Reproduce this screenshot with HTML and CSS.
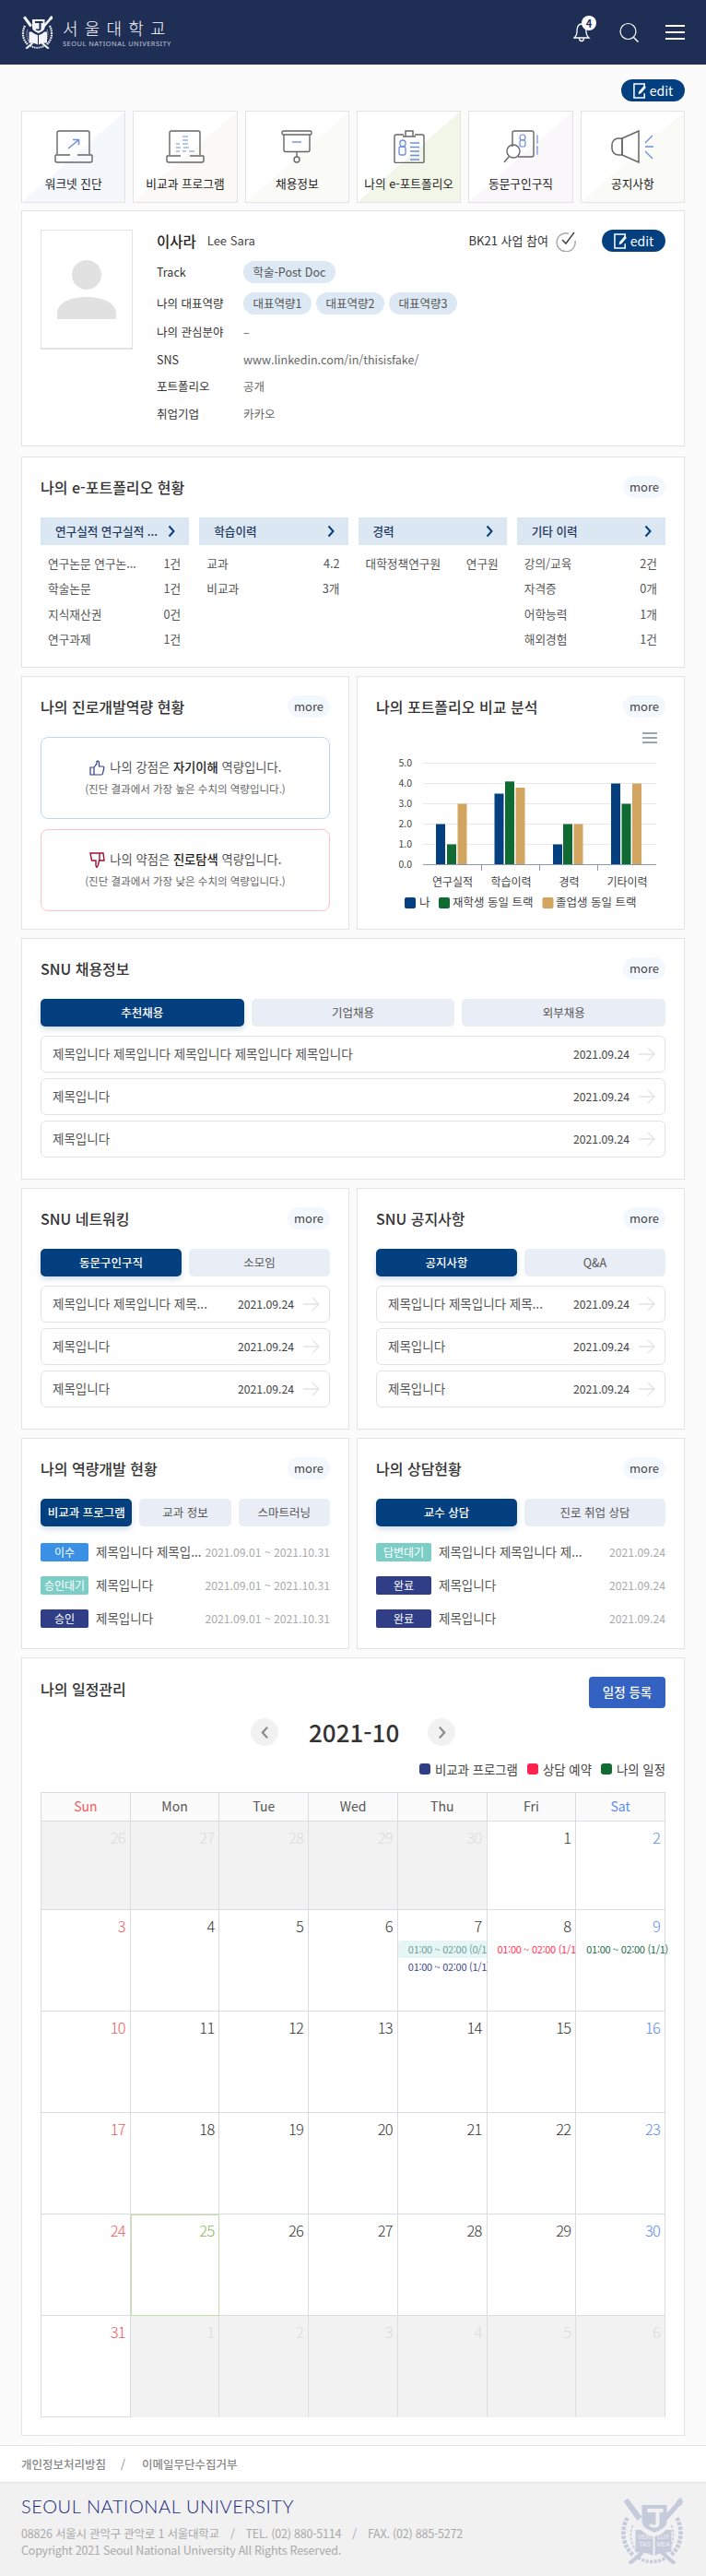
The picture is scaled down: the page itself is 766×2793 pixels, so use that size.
FILE: index.html
```html
<!DOCTYPE html>
<html lang="ko">
<head>
<meta charset="utf-8">
<title>서울대학교</title>
<link rel="stylesheet" href="styles.css">
</head>
<body>
<svg class="sprite" xmlns="http://www.w3.org/2000/svg">
  <symbol id="seal" viewBox="0 0 70 72">
    <g fill="none" stroke="currentColor">
      <path d="M8 22C1 36 3 52 14 62" stroke-width="4.500" stroke-dasharray="3.500 1.500"/>
      <path d="M62 22C69 36 67 52 56 62" stroke-width="4.500" stroke-dasharray="3.500 1.500"/>
      <path d="M14 30C10 40 12 52 20 60" stroke-width="1.500" stroke-dasharray="3 1.500"/>
      <path d="M56 30C60 40 58 52 50 60" stroke-width="1.500" stroke-dasharray="3 1.500"/>
      <path d="M20 65C28 71 42 71 50 65" stroke-width="3.500" stroke-dasharray="3 1.500"/>
    </g>
    <g fill="currentColor">
      <path d="M4 4l5-3 15 20-5 4z"/>
      <path d="M66 0c3 3 3 6 1 8l-3 2-14 16-4-4 14-15c1-3 3-5 6-7z"/>
      <path d="M9 70l14-12 3 3-14 12z"/>
      <path d="M61 70L47 58l-3 3 14 12z"/>
      <path fill-rule="evenodd" d="M24 8h27v18c0 6-7 9-13.500 12C31 35 24 32 24 26zM30 12v4h9v12c0 2-3 2-6 0l-1 3c5 3 11 2 11-3V16h4v-4z"/>
      <path d="M17 35h6c4 4 9 6 13 7v21c-5-3-12-4-19-4z"/>
      <path d="M56 35h-6c-3 4-8 6-12 7v21c5-3 11-4 18-4z"/>
    </g>
  </symbol>
  <symbol id="pen" viewBox="0 0 16 18">
    <path d="M13 6V1H1v16h12v-5" fill="none" stroke="currentColor" stroke-width="1.6"/>
    <path d="M6 13l.5-3L12.500 3l2.400 2-6 7z" fill="currentColor"/>
  </symbol>
  <symbol id="chev" viewBox="0 0 8 14">
    <path d="M1.500 1.500L6.500 7l-5 5.500" fill="none" stroke="currentColor" stroke-width="2"/>
  </symbol>
  <symbol id="arrow" viewBox="0 0 18 16">
    <path d="M0 8h17M10 1l7 7-7 7" fill="none" stroke="currentColor" stroke-width="1.400"/>
  </symbol>
</svg>

<header class="top">
  <a class="logo">
    <svg class="logo-seal"><use href="#seal"/></svg>
    <span class="logo-text">
      <span class="logo-ko">서울대학교</span>
      <span class="logo-en">SEOUL NATIONAL UNIVERSITY</span>
    </span>
  </a>
  <div class="top-icons">
    <span class="bell">
      <svg width="20" height="22" viewBox="0 0 20 22"><path d="M9 2C4.500 2 4 6 4 10c0 3-.5 5-3 7h16c-2.500-2-3-4-3-7 0-4-.5-8-5-8zM6.500 17.500c0 2 1 3 2.500 3s2.500-1 2.500-3" fill="none" stroke="#fff" stroke-width="1.300"/></svg>
      <b class="bell-count">4</b>
    </span>
    <svg class="search" width="21" height="22" viewBox="0 0 21 22"><circle cx="9.500" cy="10" r="8.500" fill="none" stroke="#fff" stroke-width="1.200"/><path d="M15.500 16.500L20.500 21.500" stroke="#fff" stroke-width="1.500"/></svg>
    <span class="burger"><i></i><i></i><i></i></span>
  </div>
</header>

<main class="wrap">
  <div class="edit-line"><a class="edit"><svg class="edit-ic"><use href="#pen"/></svg>edit</a></div>

  <nav class="tiles">
    <a class="tile t1">
      <svg width="42" height="36" viewBox="0 0 42 36"><g fill="none" stroke="#666" stroke-width="1.400"><path d="M3 26V3a2 2 0 0 1 2-2h31a2 2 0 0 1 2 2v23"/><path d="M1 27h16M25 27h16M1 27v6a2 2 0 0 0 2 2h36a2 2 0 0 0 2-2v-6"/></g><path d="M15 20l11-9M20 10.500h6.500V16" fill="none" stroke="#6f8fdc" stroke-width="1.500"/></svg>
      <span>워크넷 진단</span>
    </a>
    <a class="tile t2">
      <svg width="42" height="36" viewBox="0 0 42 36"><g fill="none" stroke="#666" stroke-width="1.400"><path d="M4 27V3a2 2 0 0 1 2-2h29a2 2 0 0 1 2 2v24"/><path d="M1 28h15M26 28h15M1 28v5a2 2 0 0 0 2 2h36a2 2 0 0 0 2-2v-5"/></g><path d="M18 7h6M18 11h6M18 15h6M11 15h4M11 19h5M19 19h6M11 23h4M18 23h4M25 23h6" stroke="#6f8fdc" stroke-width="1.200"/></svg>
      <span>비교과 프로그램</span>
    </a>
    <a class="tile t3">
      <svg width="34" height="36" viewBox="0 0 34 36"><g fill="none" stroke="#666" stroke-width="1.400"><rect x="1" y="1" width="32" height="4" rx="1.500"/><path d="M3 5v17a1.500 1.500 0 0 0 1.500 1.500h25A1.500 1.500 0 0 0 31 22V5"/><path d="M17 24v5"/><circle cx="17" cy="32" r="3"/></g><path d="M12 13h10" stroke="#6f8fdc" stroke-width="1.400"/></svg>
      <span>채용정보</span>
    </a>
    <a class="tile t4">
      <svg width="34" height="36" viewBox="0 0 34 36"><g fill="none" stroke="#666" stroke-width="1.400"><path d="M11 5H3a2 2 0 0 0-2 2v27a1.500 1.500 0 0 0 1.500 1.500h29a1.500 1.500 0 0 0 1.500-1.500V7a2 2 0 0 0-2-2h-8"/><path d="M10 7h14M13 7V1h8v6"/></g><g fill="none" stroke="#6f8fdc" stroke-width="1.300"><rect x="7" y="11" width="6" height="7" rx="3"/><rect x="6" y="18" width="7" height="9" rx="2"/><path d="M18 14h10M18 18.500h10M18 23h10M18 27.500h10M18 32h10"/></g></svg>
      <span>나의 e-포트폴리오</span>
    </a>
    <a class="tile t5">
      <svg width="38" height="36" viewBox="0 0 38 36"><g fill="none" stroke="#666" stroke-width="1.400"><path d="M10 18V3a2 2 0 0 1 2-2h19a2 2 0 0 1 2 2v24a2 2 0 0 1-2 2H16"/><circle cx="11" cy="23" r="7"/><path d="M6 29l-5 6"/></g><g fill="none" stroke="#6f8fdc" stroke-width="1.200"><rect x="18" y="5" width="6" height="6" rx="3"/><rect x="18" y="11" width="6" height="7" rx="2"/><path d="M36 6h1v8h-1M36 18h1v8h-1"/></g></svg>
      <span>동문구인구직</span>
    </a>
    <a class="tile t6">
      <svg width="48" height="36" viewBox="0 0 48 36"><g fill="none" stroke="#666" stroke-width="1.500"><path d="M13 9L31 1v34l-18-8z"/><path d="M13 9H9a7 7 0 0 0-7 7v4a7 7 0 0 0 7 7h4z"/></g><path d="M46 6l-8 8M38 18h9M38 23l8 8" fill="none" stroke="#6f8fdc" stroke-width="1.300"/></svg>
      <span>공지사항</span>
    </a>
  </nav>

  <section class="card profile">
    <div class="photo">
      <svg width="66" height="65" viewBox="0 0 66 65"><ellipse cx="33" cy="16" rx="16" ry="16" fill="#e1e1e1"/><path d="M1 64V58C1 46 16 40 33 40s32 6 32 18v6z" fill="#e1e1e1"/></svg>
    </div>
    <div class="info">
      <div class="name-row">
        <strong class="name">이사라</strong><span class="name-en">Lee Sara</span>
        <span class="bk">BK21 사업 참여</span>
        <svg class="bk-ic" width="23" height="23" viewBox="0 0 23 23"><path d="M14 3.200A10 10 0 1 0 21 11" fill="none" stroke="#aaa" stroke-width="1.500"/><path d="M7 10l4 4 9-12" fill="none" stroke="#444" stroke-width="1.500"/></svg>
        <a class="edit"><svg class="edit-ic"><use href="#pen"/></svg>edit</a>
      </div>
      <dl class="facts">
        <dt>Track</dt><dd><span class="chip">학술-Post Doc</span></dd>
        <dt>나의 대표역량</dt><dd><span class="chip">대표역량1</span><span class="chip">대표역량2</span><span class="chip">대표역량3</span></dd>
        <dt>나의 관심분야</dt><dd>–</dd>
        <dt>SNS</dt><dd>www.linkedin.com/in/thisisfake/</dd>
        <dt>포트폴리오</dt><dd>공개</dd>
        <dt>취업기업</dt><dd>카카오</dd>
      </dl>
    </div>
  </section>

  <section class="card port">
    <div class="head"><h2>나의 e-포트폴리오 현황</h2><a class="more">more</a></div>
    <div class="port-grid">
      <div>
        <a class="port-head"><span>연구실적 연구실적 ...</span><svg class="chev"><use href="#chev"/></svg></a>
        <ul class="port-list">
          <li><span>연구논문 연구논...</span><span>1건</span></li>
          <li><span>학술논문</span><span>1건</span></li>
          <li><span>지식재산권</span><span>0건</span></li>
          <li><span>연구과제</span><span>1건</span></li>
        </ul>
      </div>
      <div>
        <a class="port-head"><span>학습이력</span><svg class="chev"><use href="#chev"/></svg></a>
        <ul class="port-list">
          <li><span>교과</span><span>4.2</span></li>
          <li><span>비교과</span><span>3개</span></li>
        </ul>
      </div>
      <div>
        <a class="port-head"><span>경력</span><svg class="chev"><use href="#chev"/></svg></a>
        <ul class="port-list">
          <li><span>대학정책연구원</span><span>연구원</span></li>
        </ul>
      </div>
      <div>
        <a class="port-head"><span>기타 이력</span><svg class="chev"><use href="#chev"/></svg></a>
        <ul class="port-list">
          <li><span>강의/교육</span><span>2건</span></li>
          <li><span>자격증</span><span>0개</span></li>
          <li><span>어학능력</span><span>1개</span></li>
          <li><span>해외경험</span><span>1건</span></li>
        </ul>
      </div>
    </div>
  </section>

  <div class="two h-career">
    <section class="card">
      <div class="head"><h2>나의 진로개발역량 현황</h2><a class="more">more</a></div>
      <div class="verdict good">
        <p class="v-main"><svg class="thumb" width="17" height="17" viewBox="0 0 17 17"><path d="M1 8h4v8H1zM5 8l3-4V1.500c0-.8 2.500-.8 2.500 1.500v4h4c1 0 1.500 1 1.300 1.700l-1.300 6c-.2.800-.7 1.300-1.500 1.300H5" fill="none" stroke="#2f3e87" stroke-width="1.200"/></svg> 나의 강점은 <b>자기이해</b> 역량입니다.</p>
        <p class="v-sub">(진단 결과에서 가장 높은 수치의 역량입니다.)</p>
      </div>
      <div class="verdict bad">
        <p class="v-main"><svg class="thumb" width="17" height="17" viewBox="0 0 17 17"><path d="M1 1h14l1 8h-5.500l-1 5-1.500 2.500-1-2V9H2.500zM11 1v8" fill="none" stroke="#a01030" stroke-width="1.400"/></svg> 나의 약점은 <b>진로탐색</b> 역량입니다.</p>
        <p class="v-sub">(진단 결과에서 가장 낮은 수치의 역량입니다.)</p>
      </div>
    </section>
    <section class="card">
      <div class="head"><h2>나의 포트폴리오 비교 분석</h2><a class="more">more</a></div>
      <svg class="chart" viewBox="408 790 314 200" width="314" height="200">
        <path d="M697 795h16M697 800h16M697 805h16" stroke="#7a869a" stroke-width="1.500"/>
        <path d="M459 827.500h253M459 849.500h253M459 871.500h253M459 893.500h253M459 915.500h253" stroke="#e8e8e8" stroke-width="1"/>
        <g fill="#04407f">
          <rect x="473" y="893.500" width="10" height="44"/><rect x="536.500" y="860.500" width="10" height="77"/><rect x="600" y="915.500" width="10" height="22"/><rect x="663" y="849.500" width="10" height="88"/>
        </g>
        <g fill="#0f6b32">
          <rect x="485" y="915.500" width="10" height="22"/><rect x="548" y="847.300" width="10" height="90.200"/><rect x="611" y="893.500" width="10" height="44"/><rect x="674.500" y="871.500" width="10" height="66"/>
        </g>
        <g fill="#d1a460">
          <rect x="496.500" y="871.500" width="10" height="66"/><rect x="559.500" y="854" width="10" height="83.500"/><rect x="622.500" y="893.500" width="10" height="44"/><rect x="686" y="849.500" width="10" height="88"/>
        </g>
        <path d="M459 937.500h253" stroke="#8a99ad" stroke-width="1.200"/>
        <path d="M522.500 938v6M585.500 938v6M648.500 938v6" stroke="#8a99ad" stroke-width="1"/>
        <g class="c-y" text-anchor="end">
          <text x="447" y="831">5.0</text><text x="447" y="852.500">4.0</text><text x="447" y="874.500">3.0</text><text x="447" y="896.500">2.0</text><text x="447" y="918.500">1.0</text><text x="447" y="940.500">0.0</text>
        </g>
        <g class="c-x" text-anchor="middle">
          <text x="491" y="961">연구실적</text><text x="554.500" y="961">학습이력</text><text x="617.500" y="961">경력</text><text x="680.500" y="961">기타이력</text>
        </g>
        <g class="c-l">
          <rect x="439" y="973" width="12" height="12" rx="2" fill="#04407f"/><text x="455" y="983">나</text>
          <rect x="476" y="973" width="12" height="12" rx="2" fill="#0f6b32"/><text x="491" y="983">재학생 동일 트랙</text>
          <rect x="588.500" y="973" width="12" height="12" rx="2" fill="#d1a460"/><text x="603" y="983">졸업생 동일 트랙</text>
        </g>
      </svg>
    </section>
  </div>

  <section class="card snu">
    <div class="head"><h2>SNU 채용정보</h2><a class="more">more</a></div>
    <div class="tabs"><a class="tab on">추천채용</a><a class="tab">기업채용</a><a class="tab">외부채용</a></div>
    <ul class="rows">
      <li><span class="r-title">제목입니다 제목입니다 제목입니다 제목입니다 제목입니다</span><span class="r-date">2021.09.24</span><svg class="r-arrow"><use href="#arrow"/></svg></li>
      <li><span class="r-title">제목입니다</span><span class="r-date">2021.09.24</span><svg class="r-arrow"><use href="#arrow"/></svg></li>
      <li><span class="r-title">제목입니다</span><span class="r-date">2021.09.24</span><svg class="r-arrow"><use href="#arrow"/></svg></li>
    </ul>
  </section>

  <div class="two">
    <section class="card snu">
      <div class="head"><h2>SNU 네트워킹</h2><a class="more">more</a></div>
      <div class="tabs"><a class="tab on">동문구인구직</a><a class="tab">소모임</a></div>
      <ul class="rows">
        <li><span class="r-title">제목입니다 제목입니다 제목...</span><span class="r-date">2021.09.24</span><svg class="r-arrow"><use href="#arrow"/></svg></li>
        <li><span class="r-title">제목입니다</span><span class="r-date">2021.09.24</span><svg class="r-arrow"><use href="#arrow"/></svg></li>
        <li><span class="r-title">제목입니다</span><span class="r-date">2021.09.24</span><svg class="r-arrow"><use href="#arrow"/></svg></li>
      </ul>
    </section>
    <section class="card snu">
      <div class="head"><h2>SNU 공지사항</h2><a class="more">more</a></div>
      <div class="tabs"><a class="tab on">공지사항</a><a class="tab">Q&amp;A</a></div>
      <ul class="rows">
        <li><span class="r-title">제목입니다 제목입니다 제목...</span><span class="r-date">2021.09.24</span><svg class="r-arrow"><use href="#arrow"/></svg></li>
        <li><span class="r-title">제목입니다</span><span class="r-date">2021.09.24</span><svg class="r-arrow"><use href="#arrow"/></svg></li>
        <li><span class="r-title">제목입니다</span><span class="r-date">2021.09.24</span><svg class="r-arrow"><use href="#arrow"/></svg></li>
      </ul>
    </section>
  </div>

  <div class="two">
    <section class="card comp">
      <div class="head"><h2>나의 역량개발 현황</h2><a class="more">more</a></div>
      <div class="tabs"><a class="tab on">비교과 프로그램</a><a class="tab">교과 정보</a><a class="tab">스마트러닝</a></div>
      <ul class="status">
        <li><span class="badge b-blue">이수</span><span class="s-title">제목입니다 제목입...</span><span class="s-date">2021.09.01 ~ 2021.10.31</span></li>
        <li><span class="badge b-teal">승인대기</span><span class="s-title">제목입니다</span><span class="s-date">2021.09.01 ~ 2021.10.31</span></li>
        <li><span class="badge b-navy">승인</span><span class="s-title">제목입니다</span><span class="s-date">2021.09.01 ~ 2021.10.31</span></li>
      </ul>
    </section>
    <section class="card comp wide-badge">
      <div class="head"><h2>나의 상담현황</h2><a class="more">more</a></div>
      <div class="tabs"><a class="tab on">교수 상담</a><a class="tab">진로 취업 상담</a></div>
      <ul class="status">
        <li><span class="badge b-teal">답변대기</span><span class="s-title">제목입니다 제목입니다 제...</span><span class="s-date">2021.09.24</span></li>
        <li><span class="badge b-navy">완료</span><span class="s-title">제목입니다</span><span class="s-date">2021.09.24</span></li>
        <li><span class="badge b-navy">완료</span><span class="s-title">제목입니다</span><span class="s-date">2021.09.24</span></li>
      </ul>
    </section>
  </div>

  <section class="card cal-card">
    <div class="cal-top"><h2>나의 일정관리</h2><a class="reg">일정 등록</a></div>
    <div class="month">
      <a class="nav"><svg class="nav-ic flip"><use href="#chev"/></svg></a>
      <strong>2021-10</strong>
      <a class="nav"><svg class="nav-ic"><use href="#chev"/></svg></a>
    </div>
    <div class="cal-legend">
      <span><i class="dot d-navy"></i>비교과 프로그램</span>
      <span><i class="dot d-red"></i>상담 예약</span>
      <span><i class="dot d-green"></i>나의 일정</span>
    </div>
    <div class="cal">
      <div class="th sun">Sun</div><div class="th">Mon</div><div class="th">Tue</div><div class="th">Wed</div><div class="th">Thu</div><div class="th">Fri</div><div class="th sat">Sat</div>

      <div class="td off"><b>26</b></div><div class="td off"><b>27</b></div><div class="td off"><b>28</b></div><div class="td off"><b>29</b></div><div class="td off"><b>30</b></div><div class="td"><b>1</b></div><div class="td sat"><b>2</b></div>

      <div class="td sun"><b>3</b></div><div class="td"><b>4</b></div><div class="td"><b>5</b></div><div class="td"><b>6</b></div>
      <div class="td"><b>7</b><p class="ev ev-teal">01:00 ~ 02:00 (0/1</p><p class="ev ev-navy">01:00 ~ 02:00 (1/1)</p></div>
      <div class="td"><b>8</b><p class="ev ev-red">01:00 ~ 02:00 (1/1)</p></div>
      <div class="td sat"><b>9</b><p class="ev ev-green">01:00 ~ 02:00 (1/1)</p></div>

      <div class="td sun"><b>10</b></div><div class="td"><b>11</b></div><div class="td"><b>12</b></div><div class="td"><b>13</b></div><div class="td"><b>14</b></div><div class="td"><b>15</b></div><div class="td sat"><b>16</b></div>
      <div class="td sun"><b>17</b></div><div class="td"><b>18</b></div><div class="td"><b>19</b></div><div class="td"><b>20</b></div><div class="td"><b>21</b></div><div class="td"><b>22</b></div><div class="td sat"><b>23</b></div>
      <div class="td sun"><b>24</b></div><div class="td today"><b>25</b></div><div class="td"><b>26</b></div><div class="td"><b>27</b></div><div class="td"><b>28</b></div><div class="td"><b>29</b></div><div class="td sat"><b>30</b></div>
      <div class="td sun"><b>31</b></div><div class="td off"><b>1</b></div><div class="td off"><b>2</b></div><div class="td off"><b>3</b></div><div class="td off"><b>4</b></div><div class="td off"><b>5</b></div><div class="td off"><b>6</b></div>
    </div>
  </section>
</main>

<footer>
  <div class="foot-links"><a>개인정보처리방침</a><i>/</i><a>이메일무단수집거부</a></div>
  <div class="foot-main">
    <div>
      <p class="foot-brand">SEOUL NATIONAL UNIVERSITY</p>
      <p class="foot-addr">08826 서울시 관악구 관악로 1 서울대학교<i>/</i>TEL. (02) 880-5114<i>/</i>FAX. (02) 885-5272</p>
      <p class="foot-copy">Copyright 2021 Seoul National University All Rights Reserved.</p>
    </div>
    <svg class="foot-seal" viewBox="0 0 70 72"><use href="#seal" width="70" height="72"/><g class="seal-words" text-anchor="middle"><text x="27" y="45">VERI</text><text x="27" y="53">TAS</text><text x="47" y="45">LUX</text><text x="47" y="53">MEA</text></g></svg>
  </div>
</footer>
</body>
</html>
```

FILE: styles.css
```css
* { box-sizing: border-box; }
html, body { margin: 0; padding: 0; }
body {
  background: #fbfbfb;
  color: #444;
  font-family: "Noto Sans CJK KR", "Noto Sans", sans-serif;
  font-size: 13.5px;
  line-height: 20px;
}
h2, p, ul, dl, dd { margin: 0; padding: 0; }
ul { list-style: none; }
a { color: inherit; text-decoration: none; }
i { font-style: normal; }
.sprite { position: absolute; width: 0; height: 0; }

.top {
  height: 70px;
  background: #1f2e55;
  display: flex;
  align-items: center;
  justify-content: space-between;
  padding: 0 23px;
}
.logo { display: flex; align-items: center; gap: 10px; color: #f4f5f8; }
.logo-seal { width: 35px; height: 36px; }
.logo-text { display: flex; flex-direction: column; }
.logo-ko {
  font-size: 18px;
  font-weight: 300;
  line-height: 24px;
  letter-spacing: 7.2px;
  color: #fff;
}
.logo-en {
  font-family: "Noto Sans", sans-serif;
  font-size: 7.5px;
  line-height: 11px;
  letter-spacing: .45px;
  color: #c3c9d8;
  white-space: nowrap;
}
.top-icons { display: flex; align-items: center; }
.bell { position: relative; display: flex; margin-right: 30px; }
.bell-count {
  position: absolute;
  left: 9px;
  top: -7px;
  width: 16px;
  height: 16px;
  border-radius: 50%;
  background: #fff;
  color: #1f2e55;
  font-size: 11px;
  line-height: 16px;
  text-align: center;
}
.search { margin-right: 29px; }
.burger { display: flex; flex-direction: column; gap: 5px; width: 21px; }
.burger i { display: block; height: 2px; background: #fff; }

.wrap { padding: 16px 23px 10px; }
.edit-line { display: flex; justify-content: flex-end; margin-bottom: 10px; }
.edit {
  display: flex;
  align-items: center;
  justify-content: center;
  gap: 3px;
  width: 69px;
  height: 24px;
  border-radius: 12px;
  background: #04407f;
  color: #fff;
  font-size: 14px;
  flex: none;
}
.edit-ic { width: 15px; height: 17px; color: #fff; }

.tiles {
  display: grid;
  grid-template-columns: repeat(6, minmax(0, 1fr));
  gap: 8px;
  margin-bottom: 8px;
}
.tile {
  height: 100px;
  border: 1px solid #e3e3e3;
  display: flex;
  flex-direction: column;
  align-items: center;
  padding-top: 20px;
  font-size: 12.7px;
  color: #222;
}
.tile svg { height: 36px; margin-bottom: 12px; }
.t1 { background: linear-gradient(to bottom right, #fff 50%, #f4f8fd 50%); }
.t2 { background: linear-gradient(to bottom right, #fff 50%, #faf9f6 50%); }
.t3 { background: linear-gradient(to bottom right, #fff 50%, #fafaf7 50%); }
.t4 { background: linear-gradient(to bottom right, #fff 50%, #f2f6e8 50%); }
.t5 { background: linear-gradient(to bottom right, #fff 50%, #faf7fb 50%); }
.t6 { background: linear-gradient(to bottom right, #fff 50%, #fafaf6 50%); }

.card {
  background: #fff;
  border: 1px solid #e3e3e3;
  padding: 20px 20px 22px;
  min-width: 0;
}
.head {
  display: flex;
  align-items: center;
  justify-content: space-between;
  height: 24px;
  margin-bottom: 21px;
}
h2 { font-size: 16px; font-weight: 500; color: #333; line-height: 24px; }
.more {
  width: 46px;
  height: 24px;
  border-radius: 12px;
  background: #f3f8fe;
  color: #444;
  font-size: 13px;
  line-height: 23px;
  text-align: center;
}

.profile {
  display: flex;
  height: 256px;
  margin-bottom: 11px;
}
.photo {
  width: 100px;
  height: 130px;
  border: 1px solid #e3e3e3;
  border-bottom-width: 2px;
  display: flex;
  justify-content: center;
  padding-top: 32px;
  flex: none;
}
.info { flex: 1; margin-left: 26px; min-width: 0; }
.name-row { display: flex; align-items: center; height: 24px; margin-bottom: 10px; }
.name { font-size: 15.500px; font-weight: 500; color: #222; }
.name-en { margin-left: 12px; font-size: 13px; color: #444; }
.bk { margin-left: auto; font-size: 13px; color: #333; }
.bk-ic { margin: 0 27px 0 8px; }
.facts {
  display: grid;
  grid-template-columns: 94px 1fr;
  row-gap: 9.500px;
  align-items: center;
}
dt { color: #333; font-size: 12.500px; }
dd { display: flex; gap: 5px; color: #666; font-size: 12.500px; }
.chip {
  height: 24px;
  padding: 0 10.500px;
  border-radius: 12px;
  background: #dce8f3;
  color: #555;
  line-height: 23px;
  font-size: 12.500px;
}

.port { height: 229px; margin-bottom: 9px; }
.port-grid { display: grid; grid-template-columns: repeat(4, minmax(0, 1fr)); column-gap: 11px; }
.port-head {
  display: flex;
  align-items: center;
  justify-content: space-between;
  height: 30px;
  padding: 0 15px 0 16px;
  background: #dbe7f3;
  color: #23395b;
  font-weight: 500;
  font-size: 12.600px;
  white-space: nowrap;
}
.chev { width: 8px; height: 14px; color: #04407f; flex: none; }
.port-list { margin-top: 6px; }
.port-list li {
  display: flex;
  justify-content: space-between;
  height: 27.400px;
  line-height: 27px;
  padding: 0 9px 0 8px;
  color: #555;
  font-size: 12.700px;
  white-space: nowrap;
}

.two {
  display: grid;
  grid-template-columns: repeat(2, minmax(0, 1fr));
  gap: 8px;
  margin-bottom: 9px;
}
.h-career .card { height: 275px; }
.verdict {
  height: 89px;
  border: 1px solid #b9d8f5;
  border-radius: 8px;
  text-align: center;
  padding-top: 20px;
}
.verdict.bad { border-color: #ffc2c7; margin-top: 11px; }
.v-main { font-size: 13.300px; line-height: 24px; color: #555; white-space: nowrap; }
.v-main b { font-weight: 500; color: #222; }
.v-sub { font-size: 11.500px; line-height: 22px; color: #666; white-space: nowrap; }
.thumb { vertical-align: -4px; margin-right: 2px; }
.chart { display: block; margin-top: -9px; }
.c-y text { font-size: 10.500px; fill: #444; }
.c-x text { font-size: 12px; fill: #444; }
.c-l text { font-size: 12.500px; fill: #444; }

.snu { height: 262px; margin-bottom: 9px; }
.two .snu, .two .comp { margin-bottom: 0; }
.tabs { display: flex; gap: 8px; margin-bottom: 10px; }
.tab {
  flex: 1 1 0;
  min-width: 0;
  height: 30px;
  border-radius: 5px;
  background: #e9edf6;
  color: #555;
  text-align: center;
  line-height: 29px;
  font-size: 12.500px;
  white-space: nowrap;
}
.tab.on {
  background: #04407f;
  color: #fff;
  font-weight: 500;
  box-shadow: 0 3px 6px rgba(4, 64, 127, .18);
}
.rows { display: flex; flex-direction: column; gap: 6px; }
.rows li {
  display: flex;
  align-items: center;
  height: 40px;
  padding: 0 10px 0 12px;
  border: 1px solid #e2e2e2;
  border-radius: 6px;
}
.r-title {
  flex: 1;
  min-width: 0;
  margin-top: -2px;
  white-space: nowrap;
  color: #555;
}
.r-date { font-size: 12.200px; color: #444; flex: none; }
.r-arrow { width: 18px; height: 16px; margin-left: 10px; color: #e4e4e4; flex: none; }

.comp { height: 229px; }
.comp .tabs { margin-bottom: 18px; }
.status { display: flex; flex-direction: column; gap: 16px; }
.status li { display: flex; align-items: center; height: 20px; }
.badge {
  flex: none;
  width: 52px;
  height: 20px;
  border-radius: 2px;
  color: #fff;
  font-size: 12px;
  line-height: 19px;
  text-align: center;
}
.wide-badge .badge { width: 60px; }
.b-blue { background: #3a90e5; }
.b-teal { background: #7bcdc6; }
.b-navy { background: #2f3e87; }
.s-title {
  flex: 1;
  min-width: 0;
  margin: -2px 0 0 8px;
  white-space: nowrap;
  color: #555;
  font-size: 13.500px;
}
.s-date { flex: none; font-size: 12.200px; color: #aaa; }

.cal-card { height: 844px; margin-top: 9px; }
.cal-top { display: flex; justify-content: space-between; height: 34px; }
.cal-top h2 { margin-top: 1px; }
.reg {
  width: 83px;
  height: 34px;
  border-radius: 4px;
  background: #3362c3;
  color: #fff;
  font-weight: 500;
  font-size: 13.500px;
  line-height: 33px;
  text-align: center;
}
.month {
  display: flex;
  align-items: center;
  justify-content: center;
  gap: 33px;
  height: 30px;
  margin-top: 11px;
}
.month strong { width: 96px; font-size: 26px; font-weight: 500; color: #333; text-align: center; white-space: nowrap; }
.nav {
  width: 30px;
  height: 30px;
  border-radius: 50%;
  background: #f1f1f1;
  display: flex;
  align-items: center;
  justify-content: center;
}
.nav-ic { width: 9px; height: 15px; color: #888; }
.flip { transform: scaleX(-1); }
.cal-legend {
  display: flex;
  justify-content: flex-end;
  gap: 10px;
  margin-top: 15px;
  height: 20px;
  font-size: 13.400px;
  align-items: center;
}
.cal-legend span { display: flex; align-items: center; gap: 5px; }
.dot { width: 12px; height: 12px; border-radius: 3px; }
.d-navy { background: #2f3e87; }
.d-red { background: #ff2350; }
.d-green { background: #0f6b32; }
.cal {
  display: grid;
  grid-template-columns: repeat(7, minmax(0, 1fr));
  grid-template-rows: 31px 96px repeat(5, 110px);
  margin-top: 15px;
  border-top: 1px solid #d8dbe0;
  border-left: 1px solid #d8dbe0;
}
.th {
  background: #fbfbfb;
  border-right: 1px solid #d8dbe0;
  border-bottom: 1px solid #d8dbe0;
  text-align: center;
  line-height: 29px;
  font-size: 14px;
  color: #555;
}
.th.sun { color: #ee5b5b; }
.th.sat { color: #5b8de8; }
.td {
  min-width: 0;
  border-right: 1px solid #d8dbe0;
  border-bottom: 1px solid #d8dbe0;
  background: #fff;
  color: #333;
}
.td.sun { color: #ee5b5b; }
.td.sat { color: #5b8de8; }
.td b {
  display: block;
  height: 33px;
  padding: 7px 5px 0 0;
  text-align: right;
  font-size: 16.500px;
  font-weight: 300;
  line-height: 20px;
  letter-spacing: -.8px;
}
.td.off { background: #f2f2f2; color: #dcdcdc; border-bottom-color: #f2f2f2; border-right-color: #dedede; }
.cal > .td.off:nth-child(-n+14) { border-bottom-color: #d8dbe0; }
.td.today { outline: 1px solid #c5dba8; outline-offset: -1px; color: #8db55a; }
.ev {
  height: 19px;
  padding-left: 11px;
  font-size: 11px;
  line-height: 18px;
  letter-spacing: -.3px;
  white-space: nowrap;
}
.ev-teal { background: #e6f6f5; color: #6f9f9c; border-radius: 2px; }
.ev-navy { color: #3e4a8f; }
.ev-red { color: #ff3355; }
.ev-green { color: #1c6b45; }

footer { background: #fff; border-top: 1px solid #e3e3e3; }
.foot-links {
  height: 39px;
  padding: 0 23px;
  display: flex;
  align-items: center;
  font-size: 12.500px;
  color: #888;
  font-weight: 500;
}
.foot-links i { margin: 0 18px 0 16px; font-weight: 400; }
.foot-main {
  height: 103px;
  background: #f1f1f1;
  border-top: 1px solid #e3e3e3;
  padding: 14px 23px 0;
  display: flex;
  justify-content: space-between;
}
.foot-brand {
  font-family: "Lato", sans-serif;
  font-weight: 300;
  font-size: 20px;
  line-height: 22px;
  letter-spacing: .6px;
  color: #16267a;
  white-space: nowrap;
  margin-bottom: 10px;
}
.foot-addr, .foot-copy { font-size: 12.500px; line-height: 18px; letter-spacing: -.21px; color: #aaa; white-space: nowrap; }
.foot-addr i { margin: 0 12px; }
.foot-seal { width: 71px; height: 72px; color: #c6cbdb; margin-top: 2px; flex: none; }
.seal-words text { font-family: "Liberation Sans", sans-serif; font-size: 6.5px; fill: #f1f1f1; }
```
